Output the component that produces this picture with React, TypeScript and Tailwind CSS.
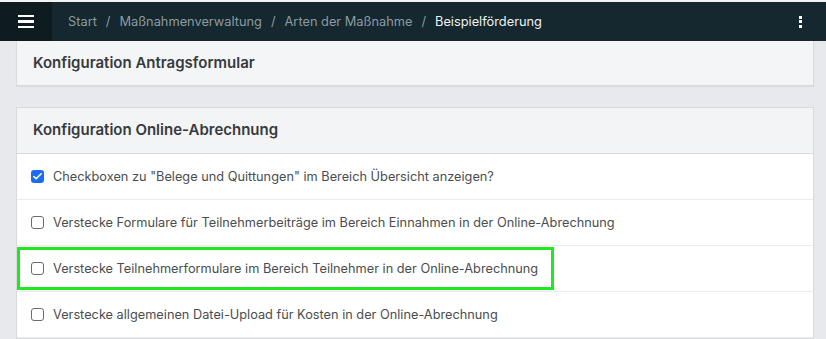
import { Check } from "lucide-react";

const rows = [
  { label: 'Checkboxen zu "Belege und Quittungen" im Bereich Übersicht anzeigen?', checked: true },
  { label: "Verstecke Formulare für Teilnehmerbeiträge im Bereich Einnahmen in der Online-Abrechnung", checked: false },
  { label: "Verstecke Teilnehmerformulare im Bereich Teilnehmer in der Online-Abrechnung", checked: false, highlight: true },
  { label: "Verstecke allgemeinen Datei-Upload für Kosten in der Online-Abrechnung", checked: false },
];

const crumbs = ["Start", "Maßnahmenverwaltung", "Arten der Maßnahme"];

function Box({ checked }: { checked: boolean }) {
  if (checked) {
    return (
      <span className="flex h-[13px] w-[13px] shrink-0 items-center justify-center rounded-[3px] bg-[#1a6cf0]">
        <Check size={11} strokeWidth={3.5} className="text-white" aria-hidden="true" />
      </span>
    );
  }
  return <span className="h-[13px] w-[13px] shrink-0 rounded-[3px] border border-[#6b6b6b] bg-white" />;
}

export default function App() {
  return (
    <div
      className="min-h-[339px] w-full overflow-hidden bg-[#e8e9ec]"
      style={{ fontFamily: "Inter, 'Noto Sans', sans-serif" }}
    >
      <div className="h-[2px] bg-[#f2f3f5]" />
      <header className="flex h-[39px] items-center bg-[#15272f]">
        <div className="flex h-full w-[52px] items-center justify-center bg-[#0e1b1f]">
          <div className="flex w-[16px] flex-col gap-[3px]">
            <span className="h-[2.5px] bg-white" />
            <span className="h-[2.5px] bg-white" />
            <span className="h-[2.5px] bg-white" />
          </div>
        </div>
        <nav className="ml-4 flex items-center text-[12.8px]">
          {crumbs.map((c) => (
            <span key={c} className="flex items-center text-[#8c9ba1]">
              {c}
              <span className="mx-[9px]">/</span>
            </span>
          ))}
          <span className="text-[#eef2f3]">Beispielförderung</span>
        </nav>
        <div className="ml-auto mr-[24px] flex flex-col gap-[1.5px]">
          <span className="h-[3px] w-[3.5px] bg-white" />
          <span className="h-[3px] w-[3.5px] bg-white" />
          <span className="h-[3px] w-[3.5px] bg-white" />
        </div>
      </header>

      <div className="ml-4 mr-3">
        <section className="flex h-[45px] items-center border-x border-b border-[#d9dadd] bg-[#f4f5f7] px-4 pt-[1px] shadow-[0_1px_1px_rgba(0,0,0,0.06)]">
          <h2 className="text-[15px] font-semibold text-[#363a3d]">Konfiguration Antragsformular</h2>
        </section>

        <section className="mt-[21px] border border-[#d9dadd] bg-white">
          <div className="flex h-[46px] items-center border-b border-[#d6d7da] bg-[#f3f4f6] px-4">
            <h2 className="text-[15px] font-semibold text-[#363a3d]">Konfiguration Online-Abrechnung</h2>
          </div>
          {rows.map((r) => (
            <div
              key={r.label}
              className="relative flex h-[46px] items-center gap-[9px] border-b border-[#ebebed] px-[14px] text-[12.75px] text-[#4a4d50]"
            >
              <Box checked={r.checked} />
              <span>{r.label}</span>
              {r.highlight && (
                <div className="absolute left-0 top-[1px] h-[43px] w-[537px] border-[3px] border-[#1ee81e]" />
              )}
            </div>
          ))}
        </section>
      </div>
    </div>
  );
}
